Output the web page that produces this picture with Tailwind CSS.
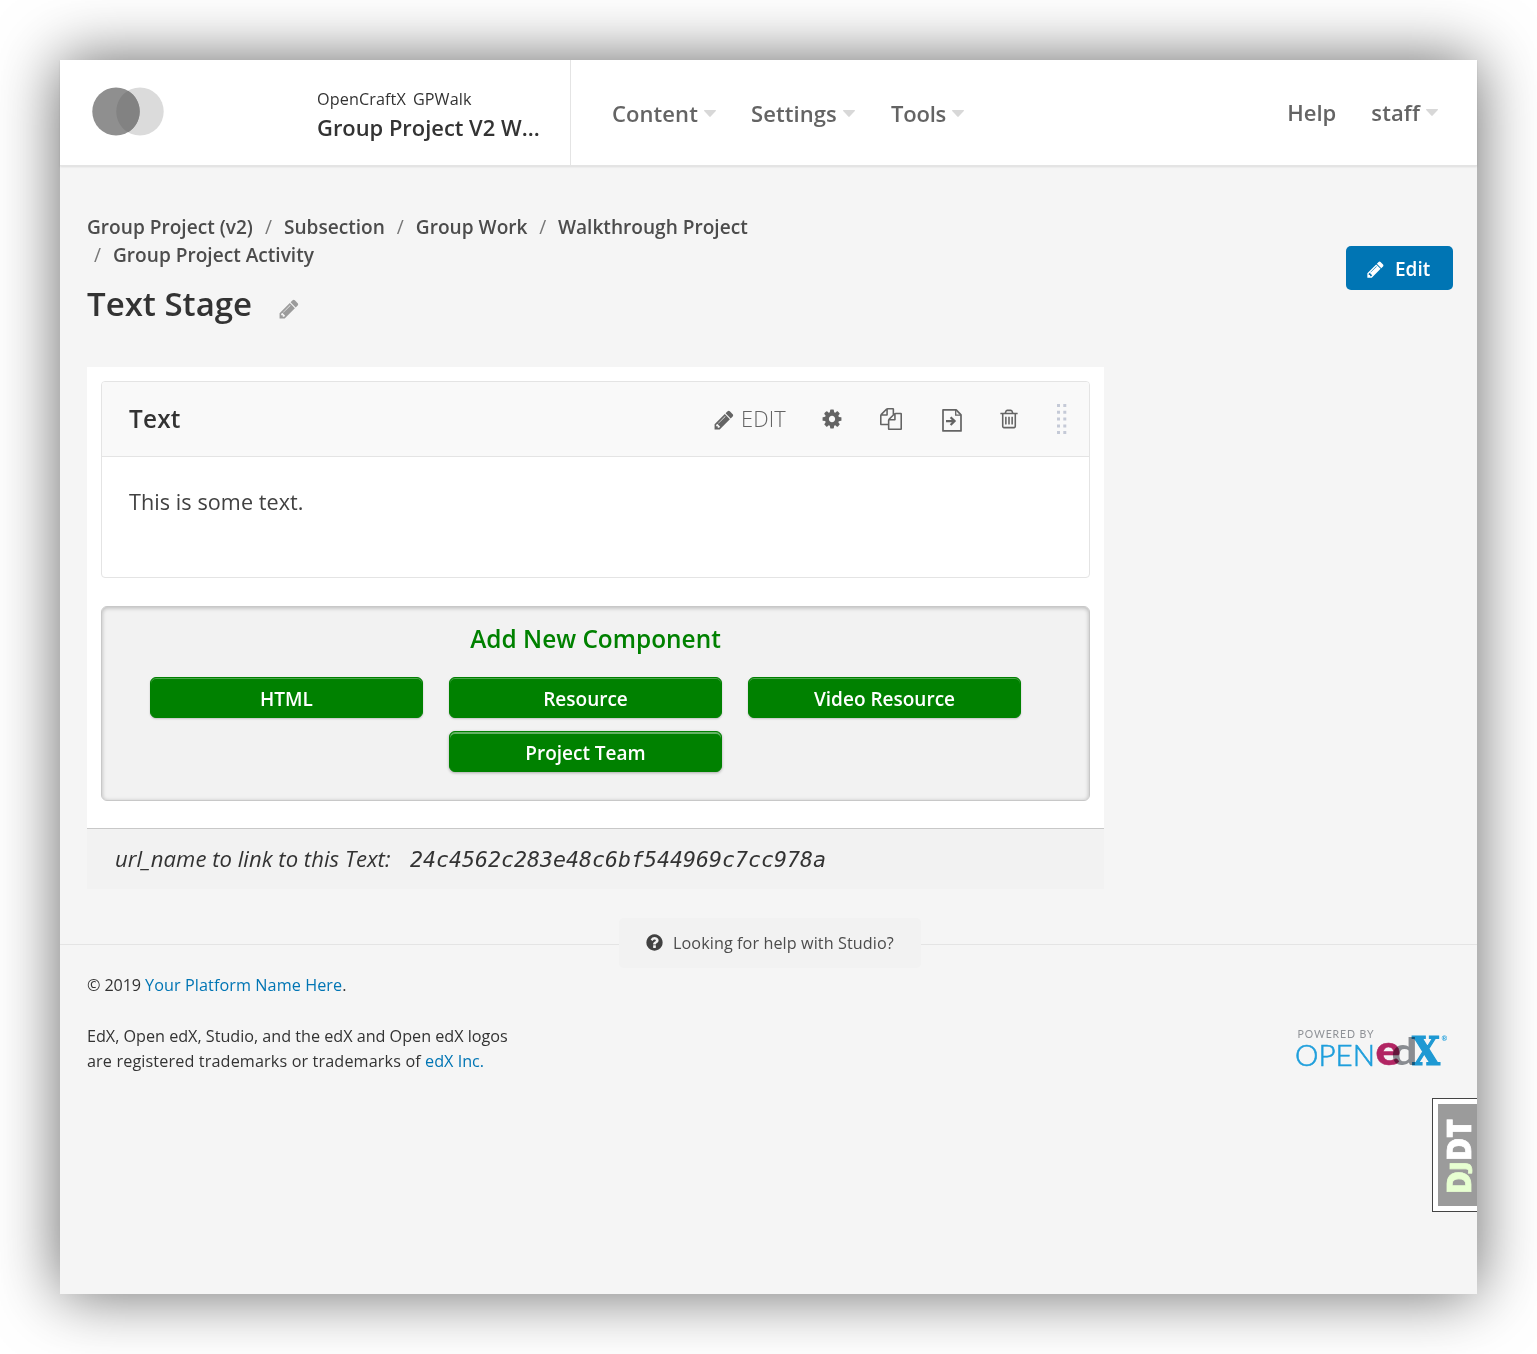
<!DOCTYPE html>
<html lang="en">
<head>
<meta charset="utf-8">
<title>Text Stage | Studio</title>
<script src="https://cdn.jsdelivr.net/npm/@tailwindcss/browser@4"></script>
</head>
<body class="bg-white p-[60px] font-['Open_Sans',sans-serif] text-[#333]">
<svg class="hidden">
  <symbol id="pencil" viewBox="0 0 1792 1792"><path d="M491 1536l91-91-235-235-91 91v107h128v128h107zm523-928q0-22-22-22-10 0-17 7l-542 542q-7 7-7 17 0 22 22 22 10 0 17-7l542-542q7-7 7-17zm-54-192l416 416-832 832h-416v-416zm683 96q0 53-37 90l-166 166-416-416 166-165q36-38 90-38 53 0 91 38l235 234q37 39 37 91z"/></symbol>
  <symbol id="caret" viewBox="0 0 12 7"><path d="M.6 0h10.800q.9 0 .4.900L6.700 6.600q-.7.700-1.400 0L.2.900Q-.3 0 .6 0z"/></symbol>
</svg>
<div class="relative h-[1234px] w-[1417px] bg-[#f5f5f5] shadow-[0_0_60px_rgba(0,0,0,0.6)]">
  <header class="flex h-[106px] border-b border-[#e4e4e4] bg-white whitespace-nowrap shadow-[0_1px_2px_rgba(0,0,0,0.1)]">
    <div class="w-[257px] pt-[27px] pl-8">
      <svg width="72" height="49" viewBox="0 0 72 49"><ellipse cx="48" cy="24.500" rx="23.700" ry="24" fill="#dbdbdb"/><ellipse cx="24" cy="24.500" rx="23.700" ry="24" fill="#8f8f8f"/><path d="M36 3.800a23.700 24 0 0 1 0 41.400a23.700 24 0 0 1 0-41.400z" fill="#828282"/></svg>
    </div>
    <div class="w-[254px] border-r border-[#e4e4e4] pt-[27px]">
      <div class="flex gap-[7px] text-[16.2px] leading-6 tracking-[0.1px]"><span>OpenCraftX</span><span>GPWalk</span></div>
      <div class="text-[21.9px] font-semibold leading-[34px]">Group Project V2 W...</div>
    </div>
    <nav class="flex flex-1 items-start pt-9 pr-[39px] pl-[41px] text-[22px] font-semibold leading-[34px] text-[#646464]">
      <a class="flex w-[139px] items-center"><span class="w-[92px] tracking-[0.08px]">Content</span><svg class="h-[7px] w-3 fill-[#d8d8d8]"><use href="#caret"/></svg></a>
      <a class="flex w-[140px] items-center"><span class="w-[92px] tracking-[0.08px]">Settings</span><svg class="h-[7px] w-3 fill-[#d8d8d8]"><use href="#caret"/></svg></a>
      <a class="flex items-center"><span class="w-[61px] tracking-[-0.2px]">Tools</span><svg class="h-[7px] w-3 fill-[#d8d8d8]"><use href="#caret"/></svg></a>
      <a class="-mt-px mr-[35px] ml-auto">Help</a>
      <a class="-mt-px flex items-center gap-1.5"><span class="tracking-[0.12px]">staff</span><svg class="h-[7px] w-3 fill-[#d8d8d8]"><use href="#caret"/></svg></a>
    </nav>
  </header>

  <main>
    <div class="flex items-start justify-between pt-[47px] pr-6 pl-[27px]">
      <div>
        <div class="flex w-[700px] flex-wrap text-[19.1px] font-semibold leading-7 whitespace-nowrap text-[#4c4c4c]">
          <span>Group Project (v2)</span><span class="w-[31px] text-center font-normal text-[#777]">/</span><span>Subsection</span><span class="w-[31px] text-center font-normal text-[#777]">/</span><span>Group Work</span><span class="w-[30.500px] text-center font-normal text-[#777]">/</span><span>Walkthrough Project</span>
          <span class="basis-full"></span>
          <span class="w-[26px] pl-[7px] font-normal text-[#777]">/</span><span>Group Project Activity</span>
        </div>
        <div class="mt-3 flex h-[45px] items-start gap-[26px] text-[33px] font-semibold leading-[45px]">
          <h1>Text Stage</h1>
          <svg class="mt-[17px] h-[22px] w-[22px] fill-[#9b9b9b]"><use href="#pencil"/></svg>
        </div>
      </div>
      <a class="mt-[33px] flex h-11 w-[107px] items-center rounded-[5px] bg-[#0075b4] pl-5 text-[19px] font-semibold text-white">
        <svg class="mr-2.5 mt-0.5 h-[19px] w-[19px] fill-white"><use href="#pencil"/></svg><span class="pt-0.5">Edit</span>
      </a>
    </div>

    <section class="mt-[41px] ml-[27px] w-[1017px] bg-white">
      <div class="px-3.5 pt-3.5 pb-[27px]">
        <article class="h-[197px] rounded-[4px] border border-[#e4e4e4]">
          <header class="flex h-[75px] items-center rounded-t-[3px] border-b border-[#e4e4e4] bg-[#f9f9f9] pr-[22px] pl-[27px] text-[#646464]">
            <h2 class="mr-auto text-[24.3px] font-semibold tracking-[0.25px] text-[#333]">Text</h2>
            <svg class="mt-px h-[22px] w-[22px] fill-current"><use href="#pencil"/></svg>
            <span class="ml-1.5 w-[47px] text-[21.8px] font-light tracking-[0.1px]">EDIT</span>
            <svg class="ml-[33px] h-[22px] w-[22px] fill-current" viewBox="0 0 1792 1792"><path d="M1152 896q0-106-75-181t-181-75-181 75-75 181 75 181 181 75 181-75 75-181zm512-109v222q0 12-8 23t-20 13l-185 28q-19 54-39 91 35 50 107 138 10 12 10 25t-9 23q-27 37-99 108t-94 71q-12 0-26-9l-138-108q-44 23-91 38-16 136-29 186-7 28-36 28h-222q-14 0-24.500-8.500t-11.500-21.500l-28-184q-49-16-90-37l-141 107q-10 9-25 9-14 0-25-11-126-114-165-168-7-10-7-23 0-12 8-23 15-21 51-66.500t54-70.500q-27-50-41-99l-183-27q-13-2-21-12.500t-8-23.500v-222q0-12 8-23t19-13l186-28q14-46 39-92-40-57-107-138-10-12-10-24 0-10 9-23 26-36 98.500-107.500t94.500-71.500q13 0 26 10l138 107q44-23 91-38 16-136 29-186 7-28 36-28h222q14 0 24.500 8.500t11.500 21.500l28 184q49 16 90 37l142-107q9-9 24-9 13 0 25 10 129 119 165 170 7 8 7 22 0 12-8 23-15 21-51 66.500t-54 70.500q26 50 41 98l183 28q13 2 21 12.500t8 23.500z"/></svg>
            <svg class="ml-[37px] h-[22px] w-[22px] fill-current" viewBox="0 0 1792 1792"><path d="M1696 384q40 0 68 28t28 68v1216q0 40-28 68t-68 28h-960q-40 0-68-28t-28-68v-288h-544q-40 0-68-28t-28-68v-672q0-40 20-88t48-76l408-408q28-28 76-48t88-20h416q40 0 68 28t28 68v328q68-40 128-40h416zm-544 213l-299 299h299v-299zm-640-384l-299 299h299v-299zm196 647l316-316v-416h-384v416q0 40-28 68t-68 28h-416v640h512v-256q0-40 20-88t48-76zm956 804v-1152h-384v416q0 40-28 68t-68 28h-416v640h896z"/></svg>
            <svg class="mt-[3px] ml-10 h-[23px] w-5 fill-none stroke-current stroke-[1.7]" viewBox="0 0 20 23"><path d="M1 .9h13.200L19 5.900v16H1z" stroke-linejoin="round"/><path d="M13.700 1v5.200H19" stroke-width="1.300"/><path d="M4 12.100h8M8.600 8.200l4 3.900-4 3.900" stroke-width="2.200"/></svg>
            <svg class="ml-[35.500px] h-[22px] w-[22px] fill-current" viewBox="0 0 1792 1792"><path d="M704 736v576q0 14-9 23t-23 9h-64q-14 0-23-9t-9-23v-576q0-14 9-23t23-9h64q14 0 23 9t9 23zm256 0v576q0 14-9 23t-23 9h-64q-14 0-23-9t-9-23v-576q0-14 9-23t23-9h64q14 0 23 9t9 23zm256 0v576q0 14-9 23t-23 9h-64q-14 0-23-9t-9-23v-576q0-14 9-23t23-9h64q14 0 23 9t9 23zm128 724v-948h-896v948q0 22 7 40.500t14.500 27 10.500 8.500h832q3 0 10.500-8.500t14.500-27 7-40.500zm-672-1076h448l-48-117q-7-9-17-11h-317q-10 2-17 11zm928 32v64q0 14-9 23t-23 9h-96v948q0 83-47 143.500t-113 60.500h-832q-66 0-113-58.500t-47-141.500v-952h-96q-14 0-23-9t-9-23v-64q0-14 9-23t23-9h309l70-167q15-37 54-63t79-26h320q40 0 79 26t54 63l70 167h309q14 0 23 9t9 23z"/></svg>
            <svg class="ml-[37.500px] h-[30px] w-[10px] fill-[#c5cad7]" viewBox="0 0 10 30"><path d="M0 0h3v3H0zM6.300 0h3v3H6.300zM0 6.800h3v3H0zM6.300 6.800h3v3H6.300zM0 13.600h3v3H0zM6.300 13.600h3v3H6.300zM0 20.400h3v3H0zM6.300 20.400h3v3H6.300zM0 27h3v3H0zM6.300 27h3v3H6.300z"/></svg>
          </header>
          <p class="pt-[29px] pl-[27px] text-[21.6px] leading-8 tracking-[0.07px] text-[#414141]">This is some text.</p>
        </article>

        <div class="mt-7 h-[195px] rounded-[6px] border border-[#c8c8c8] bg-[#f2f2f2] pt-[15px] shadow-[inset_0_1px_4px_rgba(0,0,0,0.25)]">
          <h3 class="text-center text-[24.400px] font-semibold leading-[33px] text-[#008100]">Add New Component</h3>
          <div class="mt-[22px] ml-12 grid w-[871px] grid-cols-3 gap-x-[26px] gap-y-[13px] text-center text-[19px] font-semibold leading-[41px] text-white">
            <a class="h-[41px] rounded-[6px] border border-[#008100] bg-[#008100] pt-px shadow-[0_1px_2px_rgba(0,0,0,0.2),inset_0_1px_0_rgba(255,255,255,0.3)]">HTML</a>
            <a class="h-[41px] rounded-[6px] border border-[#008100] bg-[#008100] pt-px shadow-[0_1px_2px_rgba(0,0,0,0.2),inset_0_1px_0_rgba(255,255,255,0.3)]">Resource</a>
            <a class="h-[41px] rounded-[6px] border border-[#008100] bg-[#008100] pt-px shadow-[0_1px_2px_rgba(0,0,0,0.2),inset_0_1px_0_rgba(255,255,255,0.3)]">Video Resource</a>
            <a class="col-start-2 h-[41px] rounded-[6px] border border-[#008100] bg-[#008100] pt-px shadow-[0_1px_3px_rgba(0,0,0,0.3),inset_0_2px_0_rgba(255,255,255,0.4)]">Project Team</a>
          </div>
        </div>
      </div>
      <div class="flex h-[61px] items-center border-t border-[#c8c8c8] bg-[#f2f2f2] pl-7 italic whitespace-nowrap">
        <div class="flex items-baseline leading-[30px]">
          <span class="w-[295px] text-[22.1px] tracking-[0.03px]">url_name to link to this Text:</span>
          <span class="font-['DejaVu_Sans_Mono',monospace] text-[21.6px]">24c4562c283e48c6bf544969c7cc978a</span>
        </div>
      </div>
    </section>
  </main>

  <footer class="text-[16.2px] leading-[25px] whitespace-nowrap">
    <div class="mt-[29px] flex items-center">
      <div class="mt-[3px] h-px w-[559px] bg-[#e4e4e4]"></div>
      <a class="flex h-[50px] w-[302px] items-center rounded-[5px] bg-[#f2f2f2] pl-[26px] tracking-[0.08px] text-[#4c4c4c]">
        <svg class="mr-[9px] -mt-0.5 h-[19px] w-[19px] fill-[#414141]" viewBox="0 0 1792 1792"><path d="M1024 1376v-192q0-14-9-23t-23-9h-192q-14 0-23 9t-9 23v192q0 14 9 23t23 9h192q14 0 23-9t9-23zm256-672q0-88-55.500-163t-138.500-116-170-41q-243 0-371 213-15 24 8 42l132 100q7 6 19 6 16 0 25-12 53-68 86-92 34-24 86-24 48 0 85.500 26t37.500 59q0 38-20 61t-68 45q-63 28-115.500 86.500t-52.500 125.500v36q0 14 9 23t23 9h192q14 0 23-9t9-23q0-19 21.500-49.500t54.500-49.500q32-18 49-28.500t46-35 44.500-48 28-60.500 12.500-81zm384 192q0 209-103 385.500t-279.500 279.500-385.500 103-385.500-103-279.500-279.500-103-385.500 103-385.500 279.500-279.500 385.500-103 385.500 103 279.500 279.500 103 385.500z"/></svg>
        <span>Looking for help with Studio?</span>
      </a>
      <div class="mt-[3px] h-px flex-1 bg-[#e4e4e4]"></div>
    </div>
    <div class="mt-[5px] flex justify-between pr-[28px] pl-[27px]">
      <div>
        <p><span class="tracking-[-0.12px]">© 2019 </span><a class="tracking-[0.08px] text-[#0075b4]">Your Platform Name Here</a>.</p>
        <p class="mt-[26px] tracking-[-0.02px]">EdX, Open edX, Studio, and the edX and Open edX logos</p>
        <p><span class="tracking-[0.13px]">are registered trademarks or trademarks of</span> <a class="text-[#0075b4]">edX Inc.</a></p>
      </div>
      <svg class="mt-[55px] overflow-visible" width="153" height="42" viewBox="0 0 153 42" font-family="Lato, sans-serif">
        <text x="1.500" y="10" font-size="10.500" fill="#8f9297" textLength="76">POWERED BY</text>
        <text x="-1" y="37.500" font-size="30" font-weight="300" fill="#1f9fdc" stroke="#1f9fdc" stroke-width=".6" textLength="80" lengthAdjust="spacingAndGlyphs">OPEN</text>
        <g class="[&>text]:mix-blend-multiply">
          <text x="79.500" y="37" font-size="41" font-weight="900" fill="#b92667" stroke="#b92667" stroke-width=".5" textLength="25" lengthAdjust="spacingAndGlyphs">e</text>
          <text x="95.500" y="37.200" font-size="38.500" font-weight="900" fill="#8f9297" textLength="26" lengthAdjust="spacingAndGlyphs">d</text>
          <text x="116" y="37.300" font-family="DejaVu Serif" font-size="38.500" font-weight="700" fill="#1f9fdc" stroke="#1f9fdc" stroke-width="1.200" textLength="28" lengthAdjust="spacingAndGlyphs">X</text>
        </g>
        <text x="145.500" y="13" font-size="7" font-weight="700" fill="#1f9fdc">®</text>
      </svg>
    </div>
  </footer>

  <!-- Debug toolbar handle, pinned over the page's right edge -->
  <div class="absolute top-[1038px] right-0 h-[114px] w-[45px] border border-r-0 border-[#444] bg-white py-[5px] pl-[5px]">
    <svg class="block bg-[#9b9b9b]" width="39" height="102" viewBox="0 0 39 102" font-family="Open Sans, sans-serif" font-weight="800">
      <g transform="translate(32.500 88) rotate(-90)" stroke-width=".7">
        <text x="-2" y="0" font-size="34" fill="#e7ffd1" stroke="#e7ffd1" textLength="23" lengthAdjust="spacingAndGlyphs">D</text>
        <text x="21" y="-4.500" font-size="22" fill="#e7ffd1" stroke="#e7ffd1" textLength="9.500" lengthAdjust="spacingAndGlyphs">J</text>
        <text x="31" y="0" font-size="34" fill="#fff" stroke="#fff" textLength="42" lengthAdjust="spacingAndGlyphs">DT</text>
      </g>
    </svg>
  </div>
</div>
</body>
</html>
